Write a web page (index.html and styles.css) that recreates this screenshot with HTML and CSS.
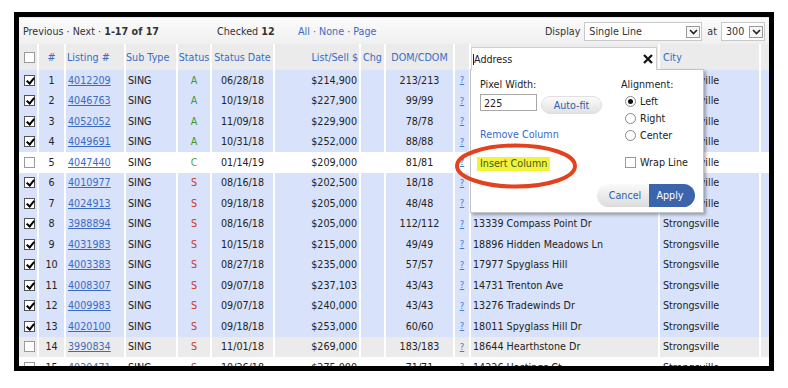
FILE: index.html
```html
<!DOCTYPE html>
<html>
<head>
<meta charset="utf-8">
<title>Listings</title>
<link rel="stylesheet" href="styles.css">
</head>
<body>
<div class="frame">
  <div class="toolbar">
    <div class="nav">Previous · Next · <b>1-17 of 17</b></div>
    <div class="checked">Checked <b>12</b></div>
    <div class="sel"><a>All</a> · <a>None</a> · <a>Page</a></div>
    <div class="display">
      <span>Display</span>
      <span class="select wide">Single Line<span class="arrow"><svg width="9" height="6" viewBox="0 0 9 6"><path d="M1 1 L4.5 4.5 L8 1" fill="none" stroke="#222" stroke-width="1.6"/></svg></span></span>
      <span>at</span>
      <span class="select narrow">300<span class="arrow"><svg width="9" height="6" viewBox="0 0 9 6"><path d="M1 1 L4.5 4.5 L8 1" fill="none" stroke="#222" stroke-width="1.6"/></svg></span></span>
    </div>
  </div>

  <div class="row head">
    <div><span class="cb"></span></div>
    <div class="c">#</div>
    <div class="l1">Listing #</div>
    <div class="l0">Sub Type</div>
    <div class="c">Status</div>
    <div class="c">Status Date</div>
    <div class="r1">List/Sell $</div>
    <div class="c">Chg</div>
    <div class="c">DOM/CDOM</div>
    <div></div>
    <div class="addr-head"><div class="addr-input"><span class="caret"></span>Address<svg class="x" width="10" height="10" viewBox="0 0 10 10"><path d="M1 1 L9 9 M9 1 L1 9" stroke="#111" stroke-width="2.2" fill="none"/></svg></div></div>
    <div class="l3">City</div>
    <div></div>
  </div>

  <div class="row on"><div><span class="cb on"></span></div><div class="c">1</div><div class="l2"><a>4012209</a></div><div class="l2">SING</div><div class="c st-a">A</div><div class="c">06/28/18</div><div class="r2">$214,900</div><div></div><div class="c">213/213</div><div class="c"><a class="q">?</a></div><div class="l2">16450 Howe Rd</div><div class="l3">Strongsville</div><div></div></div>
  <div class="row on"><div><span class="cb on"></span></div><div class="c">2</div><div class="l2"><a>4046763</a></div><div class="l2">SING</div><div class="c st-a">A</div><div class="c">10/19/18</div><div class="r2">$227,900</div><div></div><div class="c">99/99</div><div class="c"><a class="q">?</a></div><div class="l2">12780 Pearl Rd</div><div class="l3">Strongsville</div><div></div></div>
  <div class="row on"><div><span class="cb on"></span></div><div class="c">3</div><div class="l2"><a>4052052</a></div><div class="l2">SING</div><div class="c st-a">A</div><div class="c">11/09/18</div><div class="r2">$229,900</div><div></div><div class="c">78/78</div><div class="c"><a class="q">?</a></div><div class="l2">18211 Stonebridge Dr</div><div class="l3">Strongsville</div><div></div></div>
  <div class="row on"><div><span class="cb on"></span></div><div class="c">4</div><div class="l2"><a>4049691</a></div><div class="l2">SING</div><div class="c st-a">A</div><div class="c">10/31/18</div><div class="r2">$252,000</div><div></div><div class="c">88/88</div><div class="c"><a class="q">?</a></div><div class="l2">14904 Lunn Rd</div><div class="l3">Strongsville</div><div></div></div>
  <div class="row odd"><div><span class="cb"></span></div><div class="c">5</div><div class="l2"><a>4047440</a></div><div class="l2">SING</div><div class="c st-c">C</div><div class="c">01/14/19</div><div class="r2">$209,000</div><div></div><div class="c">81/81</div><div class="c"><a class="q">?</a></div><div class="l2">17355 Drake Rd</div><div class="l3">Strongsville</div><div></div></div>
  <div class="row on"><div><span class="cb on"></span></div><div class="c">6</div><div class="l2"><a>4010977</a></div><div class="l2">SING</div><div class="c st-s">S</div><div class="c">08/16/18</div><div class="r2">$202,500</div><div></div><div class="c">18/18</div><div class="c"><a class="q">?</a></div><div class="l2">15226 Whitney Rd</div><div class="l3">Strongsville</div><div></div></div>
  <div class="row on"><div><span class="cb on"></span></div><div class="c">7</div><div class="l2"><a>4024913</a></div><div class="l2">SING</div><div class="c st-s">S</div><div class="c">09/18/18</div><div class="r2">$205,000</div><div></div><div class="c">48/48</div><div class="c"><a class="q">?</a></div><div class="l2">11690 Prospect Rd</div><div class="l3">Strongsville</div><div></div></div>
  <div class="row on"><div><span class="cb on"></span></div><div class="c">8</div><div class="l2"><a>3988894</a></div><div class="l2">SING</div><div class="c st-s">S</div><div class="c">08/16/18</div><div class="r2">$205,000</div><div></div><div class="c">112/112</div><div class="c"><a class="q">?</a></div><div class="l2">13339 Compass Point Dr</div><div class="l3">Strongsville</div><div></div></div>
  <div class="row on"><div><span class="cb on"></span></div><div class="c">9</div><div class="l2"><a>4031983</a></div><div class="l2">SING</div><div class="c st-s">S</div><div class="c">10/15/18</div><div class="r2">$215,000</div><div></div><div class="c">49/49</div><div class="c"><a class="q">?</a></div><div class="l2">18896 Hidden Meadows Ln</div><div class="l3">Strongsville</div><div></div></div>
  <div class="row on"><div><span class="cb on"></span></div><div class="c">10</div><div class="l2"><a>4003383</a></div><div class="l2">SING</div><div class="c st-s">S</div><div class="c">08/27/18</div><div class="r2">$235,000</div><div></div><div class="c">57/57</div><div class="c"><a class="q">?</a></div><div class="l2">17977 Spyglass Hill</div><div class="l3">Strongsville</div><div></div></div>
  <div class="row on"><div><span class="cb on"></span></div><div class="c">11</div><div class="l2"><a>4008307</a></div><div class="l2">SING</div><div class="c st-s">S</div><div class="c">09/07/18</div><div class="r2">$237,103</div><div></div><div class="c">43/43</div><div class="c"><a class="q">?</a></div><div class="l2">14731 Trenton Ave</div><div class="l3">Strongsville</div><div></div></div>
  <div class="row on"><div><span class="cb on"></span></div><div class="c">12</div><div class="l2"><a>4009983</a></div><div class="l2">SING</div><div class="c st-s">S</div><div class="c">09/07/18</div><div class="r2">$240,000</div><div></div><div class="c">43/43</div><div class="c"><a class="q">?</a></div><div class="l2">13276 Tradewinds Dr</div><div class="l3">Strongsville</div><div></div></div>
  <div class="row on"><div><span class="cb on"></span></div><div class="c">13</div><div class="l2"><a>4020100</a></div><div class="l2">SING</div><div class="c st-s">S</div><div class="c">09/18/18</div><div class="r2">$253,000</div><div></div><div class="c">60/60</div><div class="c"><a class="q">?</a></div><div class="l2">18011 Spyglass Hill Dr</div><div class="l3">Strongsville</div><div></div></div>
  <div class="row even"><div><span class="cb"></span></div><div class="c">14</div><div class="l2"><a>3990834</a></div><div class="l2">SING</div><div class="c st-s">S</div><div class="c">11/01/18</div><div class="r2">$269,000</div><div></div><div class="c">183/183</div><div class="c"><a class="q">?</a></div><div class="l2">18644 Hearthstone Dr</div><div class="l3">Strongsville</div><div></div></div>
  <div class="row odd"><div><span class="cb"></span></div><div class="c">15</div><div class="l2"><a>4020471</a></div><div class="l2">SING</div><div class="c st-s">S</div><div class="c">10/26/18</div><div class="r2">$275,000</div><div></div><div class="c">71/71</div><div class="c"><a class="q">?</a></div><div class="l2">14226 Hastings Ct</div><div class="l3">Strongsville</div><div></div></div>

  <div class="popup">
    <div class="pcol">
      <div class="plabel">Pixel Width:</div>
      <div class="wrow">
        <div class="winput">225</div>
        <div class="autofit">Auto-fit</div>
      </div>
      <a class="remove">Remove Column</a>
      <span class="insert">Insert Column</span>
    </div>
    <div class="pcol">
      <div class="plabel">Alignment:</div>
      <div class="radio"><span class="rb on"></span>Left</div>
      <div class="radio"><span class="rb"></span>Right</div>
      <div class="radio"><span class="rb"></span>Center</div>
      <div class="wrap"><span class="cb"></span>Wrap Line</div>
    </div>
    <div class="btns">
      <span class="cancel">Cancel</span><span class="apply">Apply</span>
    </div>
  </div>

  <svg class="ring" width="140" height="60" viewBox="0 0 140 60">
    <ellipse cx="66" cy="28" rx="59" ry="20.5" fill="none" stroke="#e2431e" stroke-width="4"/>
  </svg>
</div>
</body>
</html>
```

FILE: styles.css
```css
* { box-sizing: border-box; }
html, body { margin: 0; padding: 0; background: #fff; }
body {
  padding: 12px 0 0 14px;
  font-family: "DejaVu Sans", Verdana, sans-serif;
  font-size: 9.6px;
  color: #222;
}
a { color: #3a6bc4; text-decoration: underline; }

.frame {
  position: relative;
  width: 760px;
  height: 359px;
  border: 5px solid #000;
  overflow: hidden;
  background: #fff;
}

/* toolbar */
.toolbar {
  height: 27px;
  display: flex;
  align-items: center;
  padding: 0 4px 0 4px;
  background: linear-gradient(#fbfbfb, #f0f0f0);
  border-top: 1px solid #e6e6e6;
  color: #333;
}
.nav { width: 194px; }
.checked { width: 81px; }
.sel a { color: #3a6bc4; text-decoration: none; }
.sel { color: #555; }
.display { margin-left: auto; display: flex; align-items: center; gap: 4px; }
.select {
  position: relative;
  display: flex;
  align-items: center;
  height: 19px;
  padding-left: 4px;
  background: #fff;
  border: 1px solid #c9c9c9;
  color: #333;
}
.select.wide { width: 118px; margin-right: 1px; }
.select.narrow { width: 44px; }
.select .arrow {
  position: absolute;
  right: 1px;
  top: 3px;
  width: 14px;
  height: 12px;
  border: 1px solid #9a9a9a;
  background: #f6f6f6;
  display: flex;
  align-items: center;
  justify-content: center;
}

/* rows */
.row {
  display: grid;
  grid-template-columns: 18px 25px 58px 50px 32px 61px 84px 23px 67px 14px 187px 99px 40px;
  column-gap: 2px;
  height: 20.5px;
}
.row > div {
  display: flex;
  align-items: center;
  overflow: hidden;
  white-space: nowrap;
}
.row.head { height: 26px; }
.row.head > div { background: #ebebeb; color: #3a6bc4; }
.row.on > div { background: #d8e2fa; }
.row.odd > div { background: #fff; }
.row.even > div { background: #ebebeb; }

.c { justify-content: center; }
.l0 { padding-left: 0; }
.l1 { padding-left: 1px; }
.l2 { padding-left: 2px; }
.l3 { padding-left: 3px; }
.r1 { justify-content: flex-end; padding-right: 1px; }
.r2 { justify-content: flex-end; padding-right: 2px; }

.st-a { color: #3c9a32; }
.st-c { color: #5aa84a; }
.st-s { color: #cc3a2a; }

a.q { font-size: 8.5px; color: #4a78cc; }

.cb {
  display: inline-block;
  position: relative;
  width: 11px;
  height: 11px;
  margin-left: 5px;
  border: 1px solid #9a9a9a;
  background: #fff;
}
.cb.on { border-color: #555; }
.cb.on::after {
  content: "";
  position: absolute;
  left: 3px;
  top: 0px;
  width: 3px;
  height: 6px;
  border: solid #000;
  border-width: 0 2px 2px 0;
  transform: rotate(40deg);
}

/* address header input */
.addr-head { align-items: flex-end !important; background: #ebebeb; }
.addr-input {
  position: relative;
  z-index: 3;
  width: 186px;
  height: 23px;
  background: #fff;
  border: 1px solid #cfcfcf;
  border-bottom: none;
  display: flex;
  align-items: center;
  color: #222;
  padding-left: 1px;
}
.caret { display: inline-block; width: 1px; height: 11px; background: #222; }
.addr-input .x {
  margin-left: auto;
  margin-right: 3px;
}

/* popup */
.popup {
  position: absolute;
  left: 451px;
  top: 52px;
  width: 234px;
  height: 144px;
  z-index: 2;
  background: #fff;
  border: 1px solid #c4c4c4;
  border-top: none;
  box-shadow: 2px 2px 3px rgba(0,0,0,0.3);
  display: grid;
  grid-template-columns: 141px 1fr;
  grid-template-rows: auto auto;
  padding: 10px 0 0 9px;
}
.popup::before {
  content: "";
  position: absolute;
  left: 186px;
  right: -1px;
  top: 0;
  border-top: 1px solid #c4c4c4;
}
.pcol { display: flex; flex-direction: column; align-items: flex-start; }
.plabel { line-height: 12px; color: #222; }
.wrow { display: flex; align-items: flex-start; margin-top: 3px; gap: 4px; }
.winput {
  width: 57px;
  height: 17px;
  border: 1px solid #a8a8a8;
  padding: 3px 0 0 3px;
  line-height: 12px;
}
.autofit {
  margin-top: 2px;
  width: 61px;
  height: 18px;
  border-radius: 9px;
  background: linear-gradient(#fbfbfb, #e2e2e2);
  border: 1px solid #e0e0e0;
  color: #2f60ab;
  display: flex;
  align-items: center;
  justify-content: center;
}
.remove { margin-top: 15px; line-height: 12px; text-decoration: none; color: #3a6bc4; }
.insert {
  margin-top: 16px;
  margin-left: -3px;
  padding: 0 3px;
  height: 14px;
  line-height: 14px;
  background: #f2f23a;
  color: #3f5a22;
}
.radio {
  display: flex;
  align-items: center;
  height: 17px;
  margin-left: 4px;
  gap: 4px;
}
.pcol .plabel + .radio { margin-top: 2px; }
.rb {
  width: 11px;
  height: 11px;
  border-radius: 50%;
  border: 1px solid #8a8a8a;
  background: #fff;
  position: relative;
}
.rb.on::after {
  content: "";
  position: absolute;
  left: 2px; top: 2px;
  width: 5px; height: 5px;
  border-radius: 50%;
  background: #111;
}
.wrap {
  display: flex;
  align-items: center;
  gap: 4px;
  margin-top: 13px;
  margin-left: -1px;
}
.btns {
  grid-column: 1 / 3;
  justify-self: end;
  margin: 8px 8px 0 0;
  display: flex;
  height: 23px;
}
.cancel {
  width: 52px;
  border-radius: 12px 0 0 12px;
  background: linear-gradient(#fafafa, #dcdcdc);
  color: #2f60ab;
  display: flex; align-items: center; justify-content: center;
  padding-left: 4px;
}
.apply {
  width: 46px;
  border-radius: 0 12px 12px 0;
  background: #3c64ad;
  color: #fff;
  display: flex; align-items: center; justify-content: center;
  padding-right: 4px;
}

.ring {
  position: absolute;
  left: 431px;
  top: 121px;
  z-index: 4;
}
```
